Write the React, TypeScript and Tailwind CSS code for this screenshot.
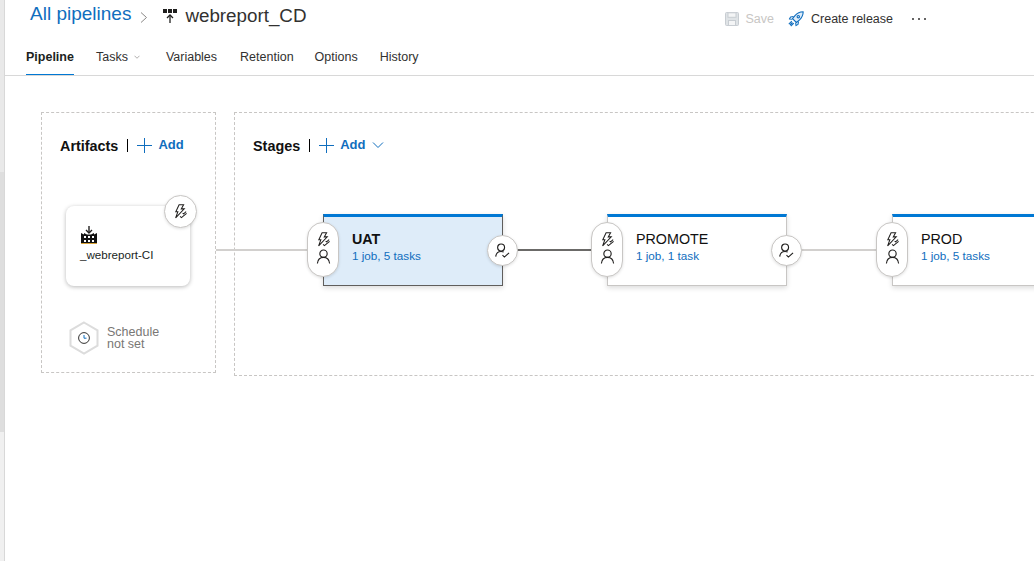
const FONT = "font-['Liberation_Sans',Arial,sans-serif]";

function BoltIcon() {
  return (
    <svg width="15" height="15" viewBox="0 0 16 16" fill="none" stroke="#201f1e" strokeWidth="1.100" strokeLinejoin="miter">
      <path d="M6.500 .8h4.800L8.800 5.200h3.200L2.800 14.800l2.400-6.600H3z" />
      <path d="M7.500 13.300l1.500 1.200 5.500-4.500M10.300 9.800l1 .8 2.700-2.400" />
    </svg>
  );
}

function PersonIcon() {
  return (
    <svg width="15" height="15" viewBox="0 0 16 16" fill="none" stroke="#201f1e" strokeWidth="1.200">
      <circle cx="8" cy="5" r="3.900" />
      <path d="M1.500 15.500c.3-3.800 2.900-6.500 6.500-6.500s6.200 2.700 6.500 6.500" />
    </svg>
  );
}

function ApproverIcon() {
  return (
    <svg width="15" height="15" viewBox="0 0 16 16" fill="none" stroke="#201f1e" strokeWidth="1.200">
      <circle cx="6.500" cy="4.800" r="3.700" />
      <path d="M.8 14.500c.3-3.300 2.400-5.500 5.700-5.500 1 0 2 .2 2.800.6" />
      <path d="M8 13l2 2 5-4.500" />
    </svg>
  );
}

function PlusIcon() {
  return (
    <svg width="15" height="15" viewBox="0 0 15 15" stroke="#106ebe" strokeWidth="1">
      <path d="M7.500 0v15M0 7.500h15" />
    </svg>
  );
}

function SaveIcon() {
  return (
    <svg width="14" height="14" viewBox="0 0 14 14" fill="#dfe3e6" stroke="#c8cdd2" strokeWidth="1">
      <rect x=".5" y=".5" width="13" height="13" rx="1" />
      <rect x="3" y=".8" width="8" height="4.500" fill="#f4f5f6" />
      <rect x="3.500" y="8.500" width="7" height="5" fill="#f4f5f6" />
    </svg>
  );
}

function RocketIcon() {
  return (
    <svg width="16" height="16" viewBox="0 0 16 16" fill="none" stroke="#106ebe" strokeWidth="1.100" strokeLinejoin="round">
      <path d="M15.200.8c-3.400.1-6 1.300-8 3.600L4.500 7.600l3.900 3.900 3.200-2.700c2.300-2 3.500-4.600 3.600-8z" fill="#deecf9" />
      <path d="M5.500 5.500L2.600 6 1.400 8l3 .3M10.500 10.500l-.5 2.900-2 1.200-.3-3" />
      <circle cx="10.300" cy="5.700" r="1.200" />
      <path d="M3.800 10.200L.8 13.200M5.800 12.200l-3 3M4.500 11.500l-2.500 2.500" />
    </svg>
  );
}

function PipelineIcon() {
  return (
    <svg width="14" height="14" viewBox="0 0 14 14">
      <path d="M0 0h4v4H0zM5 0h4v4H5zM10 0h4v4h-4z" fill="#201f1e" />
      <path d="M7 14V6.500" stroke="#201f1e" strokeWidth="1.300" />
      <path d="M4 9l3-3 3 3" stroke="#201f1e" strokeWidth="1.300" fill="none" />
    </svg>
  );
}

function BuildIcon() {
  return (
    <svg width="16" height="18" viewBox="0 0 16 18">
      <path d="M8 0v6" stroke="#201f1e" strokeWidth="1.400" />
      <path d="M5 4l3 3 3-3" stroke="#201f1e" strokeWidth="1.400" fill="none" />
      <path d="M0 17V7l3 1.500V7l3 1.500h4L13 7v1.500L16 7v10z" fill="#111" />
      <path d="M0 17.500h16" stroke="#d8a33a" strokeWidth="1" />
      <path d="M3 10h2v2H3zM7 10h2v2H7zM11 10h2v2h-2zM3 14h2v2H3zM7 14h2v2H7zM11 14h2v2h-2z" fill="#fff" />
    </svg>
  );
}

function ClockIcon() {
  return (
    <svg width="12" height="12" viewBox="0 0 12 12" fill="none" stroke="#323130" strokeWidth="1">
      <circle cx="6" cy="6" r="5.400" />
      <path d="M6 3v3.200h2.500" stroke="#106ebe" />
    </svg>
  );
}

function Chevron({ className }: { className: string }) {
  return (
    <svg className={className} viewBox="0 0 12 12" fill="none" stroke="currentColor" strokeWidth="1">
      <path d="M1 3.500l5 5 5-5" />
    </svg>
  );
}

function PanelTitle({ title, chevron }: { title: string; chevron?: boolean }) {
  return (
    <div className="flex h-[16px] items-center">
      <span className="translate-y-px text-[14.400px] font-bold text-[#111]">{title}</span>
      <span className="ml-[9px] h-[13px] w-px -translate-y-px bg-black" />
      <span className="ml-[9px] flex -translate-y-px"><PlusIcon /></span>
      <span className="ml-[6px] -translate-y-px text-[13px] font-bold text-[#106ebe]">Add</span>
      {chevron && <Chevron className="ml-[7px] h-[12px] w-[12px] -translate-y-px text-[#106ebe]" />}
    </div>
  );
}

function Stage({ name, summary, selected, bold, line }: { name: string; summary: string; selected?: boolean; bold?: boolean; line?: string }) {
  return (
    <>
      <div
        className={`relative h-[72px] w-[180px] shrink-0 border-x border-b border-t-[3px] border-t-[#0078d4] shadow-[0_2px_5px_rgba(0,0,0,0.14)] ${
          selected ? "border-x-[#605e5c] border-b-[#605e5c] bg-[#deecf9]" : "border-x-[#c8c6c4] border-b-[#c8c6c4] bg-white"
        }`}
      >
        <div className="pl-[28px] pt-[14px]">
          <div className={`text-[14.300px] leading-[16px] text-[#111] ${bold ? "font-bold" : ""}`}>{name}</div>
          <div className="mt-[1px] text-[11.700px] leading-[15px] text-[#106ebe]">{summary}</div>
        </div>
        <div className="absolute -left-[17px] top-[5px] flex h-[55px] w-[32px] flex-col items-center justify-center gap-[2px] rounded-[16px] border border-[#c8c6c4] bg-white pb-[3px] shadow-[0_1px_3px_rgba(0,0,0,0.12)]">
          <BoltIcon />
          <PersonIcon />
        </div>
        <div className="absolute -right-[16px] top-[18px] flex h-[31px] w-[31px] items-center justify-center rounded-full border border-[#c8c6c4] bg-white shadow-[0_1px_3px_rgba(0,0,0,0.12)]">
          <ApproverIcon />
        </div>
      </div>
      {line && <div className={`h-[2px] shrink-0 ${line}`} />}
    </>
  );
}

export default function App() {
  return (
    <div className={`${FONT} flex h-[561px] w-[1034px] overflow-hidden bg-white`}>
      <div className="flex w-[5px] shrink-0 flex-col border-r border-[#d8d8d8] bg-[#f0f0f0]">
        <div className="h-[172px] bg-[#e9e9e9]" />
        <div className="h-[260px] bg-[#dedede]" />
      </div>

      <div className="flex min-w-0 flex-1 flex-col">
        <div className="flex h-[41px] items-start">
          <span className="ml-[25px] mt-[3px] text-[19px] leading-[22px] text-[#106ebe]">All pipelines</span>
          <svg className="ml-[9px] mt-[12px] text-[#8a8886]" width="8" height="11" viewBox="0 0 8 11" fill="none" stroke="currentColor">
            <path d="M1 .5l5.500 5-5.500 5" />
          </svg>
          <span className="ml-[15px] mt-[9px] flex"><PipelineIcon /></span>
          <span className="ml-[8px] mt-[5px] text-[18.800px] leading-[22px] text-[#323130]">webreport_CD</span>
          <div className="ml-[418px] mt-[11px] flex items-center">
            <SaveIcon />
            <span className="ml-[7px] text-[12.500px] leading-[16px] text-[#c8c6c4]">Save</span>
            <span className="ml-[14px] flex"><RocketIcon /></span>
            <span className="ml-[7px] text-[12.500px] leading-[16px] text-[#323130]">Create release</span>
            <span className="ml-[19px] flex gap-[4px]">
              <i className="h-[2px] w-[2px] rounded-full bg-[#323130]" />
              <i className="h-[2px] w-[2px] rounded-full bg-[#323130]" />
              <i className="h-[2px] w-[2px] rounded-full bg-[#323130]" />
            </span>
          </div>
        </div>

        <div className="flex h-[35px] items-start border-b border-[#d8d8d8] pl-[21px] text-[12.500px] leading-[16px] text-[#323130]">
          <span className="flex h-[34px] flex-col justify-between pt-[8px]">
            <b className="font-bold text-[#201f1e]">Pipeline</b>
            <i className="h-[1px] bg-[#0078d4]" />
          </span>
          <span className="ml-[22px] flex items-center pt-[8px]">
            Tasks
            <Chevron className="ml-[6px] h-[6px] w-[6px] text-[#605e5c]" />
          </span>
          <span className="ml-[26px] pt-[8px]">Variables</span>
          <span className="ml-[23px] pt-[8px]">Retention</span>
          <span className="ml-[21px] pt-[8px]">Options</span>
          <span className="ml-[22px] pt-[8px]">History</span>
        </div>

        <div className="flex gap-[18px] pl-[36px] pt-[36px]">
          <div className="h-[261px] w-[175px] shrink-0 border border-dashed border-[#c8c6c4] pl-[18px] pt-[25px]">
            <PanelTitle title="Artifacts" />
            <div className="relative ml-[6px] mt-[52px] h-[80px] w-[124px] rounded-[8px] bg-white pl-[14px] pt-[20px] shadow-[0_1px_4px_rgba(0,0,0,0.28)]">
              <span className="ml-px flex"><BuildIcon /></span>
              <div className="mt-[4px] text-[11.600px] leading-[14px] text-[#201f1e]">_webreport-CI</div>
              <div className="absolute -right-[7px] -top-[11px] flex h-[33px] w-[33px] items-center justify-center rounded-full border border-[#c8c6c4] bg-white shadow-[0_1px_3px_rgba(0,0,0,0.12)]">
                <BoltIcon />
              </div>
            </div>
            <div className="ml-[9px] mt-[35px] flex items-center">
              <div className="relative flex h-[34px] w-[30px] items-center justify-center">
                <svg className="absolute inset-0" width="30" height="34" viewBox="0 0 30 34" fill="#fff" stroke="#dcdcdc" strokeWidth="2">
                  <path d="M15 1.500l13.500 7.800v15.400L15 32.500 1.500 24.700V9.300z" />
                </svg>
                <span className="relative flex"><ClockIcon /></span>
              </div>
              <div className="ml-[8px] text-[12.500px] leading-[12px] text-[#797775]">
                Schedule
                <br />
                not set
              </div>
            </div>
          </div>

          <div className="h-[264px] w-[900px] shrink-0 border border-dashed border-[#c8c6c4] pl-[18px] pt-[25px]">
            <PanelTitle title="Stages" chevron />
            <div className="-ml-[37px] mt-[60px] flex items-center">
              <div className="h-[2px] w-[107px] shrink-0 bg-[#d2d0ce]" />
              <Stage name="UAT" summary="1 job, 5 tasks" selected bold line="w-[104px] bg-[#6b6a68]" />
              <Stage name="PROMOTE" summary="1 job, 1 task" line="w-[105px] bg-[#d2d0ce]" />
              <Stage name="PROD" summary="1 job, 5 tasks" />
            </div>
          </div>
        </div>
      </div>
    </div>
  );
}
